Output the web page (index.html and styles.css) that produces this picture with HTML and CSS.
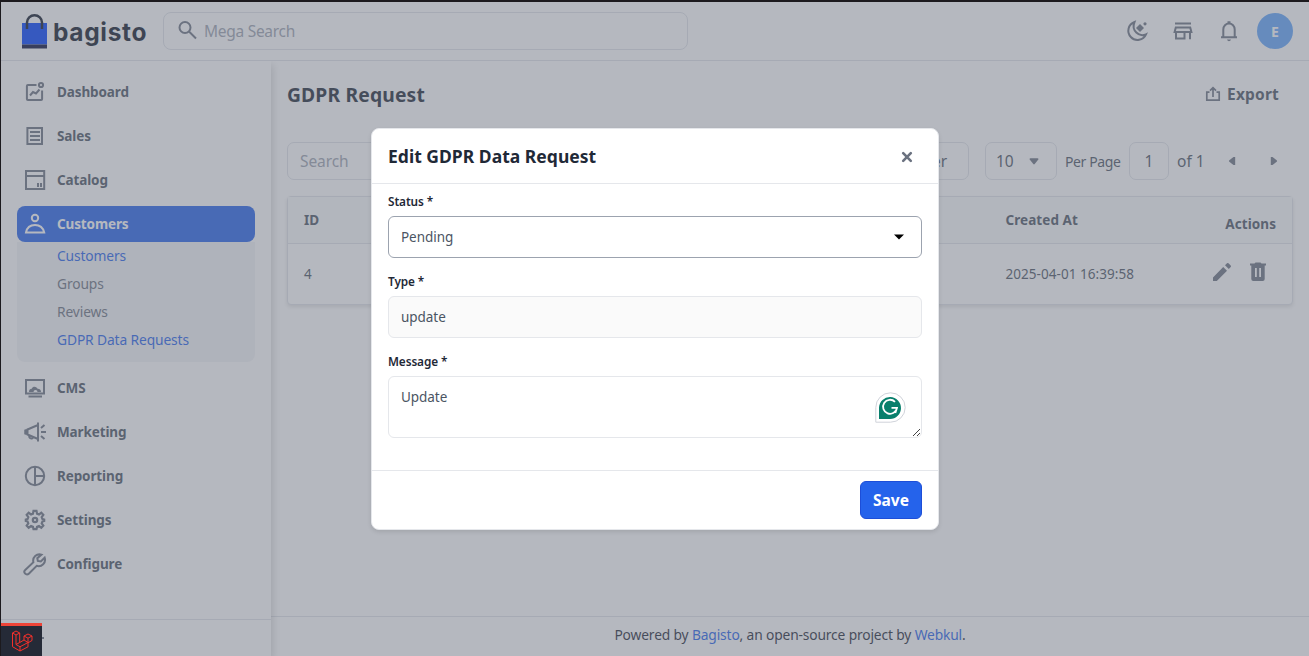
FILE: index.html
```
<!DOCTYPE html>
<html lang="en">
<head>
<meta charset="utf-8">
<title>GDPR Request</title>
<link rel="stylesheet" href="styles.css">
</head>
<body>
<div class="app">
  <header class="topbar">
    <div class="logo">
      <svg width="26" height="36" viewBox="0 0 26 36"><path class="bag" d="M1 10h25V31.500H1z"/><path class="bag-base" d="M1 31.500h25V35.500H1z"/><path class="bag-handle" d="M6 16V9.500a7.500 7.300 0 0 1 15 0V16"/></svg>
      <span class="wordmark">bagisto</span>
    </div>
    <div class="mega">
      <svg width="20" height="20" viewBox="0 0 20 20" class="ic w2"><circle cx="7" cy="6.500" r="5.500"/><path d="M11 10.500 18 17.500"/></svg>
      <span>Mega Search</span>
    </div>
    <div class="tools">
      <svg width="24" height="24" viewBox="0 0 24 24" class="ic w2"><path d="M9.500 3a9.200 9.200 0 1 0 11.500 12.300C14 18.500 6 11.500 9.500 3z"/><path class="solid" d="M15 5 19 9 15 13 11 9z"/><circle class="solid" cx="20" cy="4.800" r="1.600"/></svg>
      <svg width="24" height="24" viewBox="0 0 24 24" class="ic w2"><path d="M4 4.400h16M4.800 8.400h14.400l1.200 4.600H3.600zM5 13v6.400h8.500V13M19 13v7.300"/></svg>
      <svg width="24" height="24" viewBox="0 0 24 24" class="ic w2"><path d="M6.300 18v-7.500a5.700 6 0 0 1 11.400 0V18M4 18.300h16"/><path class="solid" d="M10.500 2.300h3v2.700h-3zM10 20.500h4q-.5 1.700-2 1.700t-2-1.700z"/></svg>
      <span class="avatar">E</span>
    </div>
  </header>

  <div class="body">
    <aside class="sidebar">
      <nav class="menu">
        <a class="item"><svg width="24" height="24" viewBox="0 0 24 24" class="ic w2"><path d="M13.500 4.900H4.900a1 1 0 0 0-1 1v13.200a1 1 0 0 0 1 1h13.200a1 1 0 0 0 1-1V10.500M7 15.500l3-3.500 3 1.500 3.500-4"/><circle cx="18" cy="5" r="2.100"/></svg><span>Dashboard</span></a>
        <a class="item"><svg width="24" height="24" viewBox="0 0 24 24" class="ic w2"><path d="M4.400 3.900h14.600v16.200h-14.600zM7 8h10M7 12h10M7 16h10"/></svg><span>Sales</span></a>
        <a class="item"><svg width="24" height="24" viewBox="0 0 24 24" class="ic w2"><path d="M3 3h18.200v18H3zM3 8h18.200M15 15v4M18 15v4"/></svg><span>Catalog</span></a>
        <a class="item active"><svg width="24" height="24" viewBox="0 0 24 24" class="ic w2"><circle cx="12" cy="6" r="3.200"/><path d="M3 20.500h18.200C20 15.500 17 13 12 13s-8 2.500-9 7.500z"/></svg><span>Customers</span></a>
        <div class="submenu">
          <a class="on">Customers</a><a>Groups</a><a>Reviews</a><a class="on">GDPR Data Requests</a>
        </div>
        <a class="item"><svg width="24" height="24" viewBox="0 0 24 24" class="ic w2"><path d="M3 4h18v13.600H3zM5.500 20.500h13.500"/><path class="solid" d="M6 16c0-2.200 1-3.200 2.700-3.200 1-2 3-2.500 4.800-1.300l1.200 1.200c2.500 0 3.300 1.300 3.300 3.300h-3.500a2 2 0 0 0-4 0z"/></svg><span>CMS</span></a>
        <a class="item"><svg width="24" height="24" viewBox="0 0 24 24" class="ic w2"><path d="M15 2.500v19M15 5 4.500 9.500v5L15 19"/><path d="M2.500 9.500v5M6.500 15.500a2 2 0 1 0 3.500 2M18 12h5M18 8l3.500-3M18 16l3.500 3"/><path class="solid" d="M1.500 10 5 8.800v6.400L1.500 14z"/></svg><span>Marketing</span></a>
        <a class="item"><svg width="24" height="24" viewBox="0 0 24 24" class="ic w2"><circle cx="12" cy="12" r="9.200"/><path d="M12 3v18M12 12h9"/></svg><span>Reporting</span></a>
        <a class="item"><svg width="24" height="24" viewBox="0 0 24 24" class="ic w22"><path d="M10.500 2.900h3l.5 2.700 2 .8 2.300-1.600 2 2-1.600 2.300.8 2 1.700.4v1.500l-1.700.4-.8 2 1.600 2.300-2 2L16 18.100l-2 .8-.5 2.200h-3l-.5-2.200-2-.8-2.300 1.600-2-2 1.600-2.300-.8-2-1.700-.4v-1.500l1.700-.4.8-2-1.600-2.300 2-2L8 6.400l2-.8z"/><circle cx="12" cy="12" r="2.200"/></svg><span>Settings</span></a>
        <a class="item"><svg width="24" height="24" viewBox="0 0 24 24" class="ic w2"><path d="M18.500 2.600a6.400 6.400 0 0 0-8.100 7.700L2.200 18a2.500 2.500 0 0 0 3.600 3.700l7.900-7.900a6.400 6.400 0 0 0 8-8.100l-3.900 3.800-3-.5-.5-2.800z"/></svg><span>Configure</span></a>
      </nav>
      <div class="collapse"><svg width="24" height="24" viewBox="0 0 24 24" class="ic w2"><path d="M4 12h17M10 6l-6 6 6 6"/></svg></div>
    </aside>

    <main class="main">
      <div class="content">
        <div class="titlebar">
          <h1>GDPR Request</h1>
          <span class="export"><svg width="16" height="16" viewBox="0 0 16 16" class="ic w16"><path d="M4.500 6.200H1.800v8h12.400v-8h-2.700M8 11V2M5 4.600 8 1.600l3 3"/></svg><b>Export</b></span>
        </div>
        <div class="toolbar">
          <span class="box search">Search</span>
          <div class="pager">
            <span class="box filter">Filter</span>
            <span class="box size">10<svg width="10" height="7" viewBox="0 0 10 7"><path class="fill" d="M.5 1.200Q.5.300 1.500.3h7q1 0 1 .9L5.700 6Q5 6.800 4.300 6z"/></svg></span>
            <span class="per">Per Page</span>
            <span class="box page">1</span>
            <span class="of">of 1</span>
            <svg class="prev" width="8" height="10" viewBox="0 0 8 10"><path class="fill" d="M7.200 1v8L5.500 9 1.300 5.700Q.5 5 1.300 4.300L5.500 1z"/></svg>
            <svg class="next" width="8" height="10" viewBox="0 0 8 10"><path class="fill" d="M.8 1v8L2.500 9 6.700 5.700Q7.500 5 6.700 4.300L2.500 1z"/></svg>
          </div>
        </div>
        <div class="table">
          <div class="row head"><span>ID</span><span>Created At</span><span class="actions">Actions</span></div>
          <div class="row"><span>4</span><span>2025-04-01 16:39:58</span>
            <span class="actions icons">
              <svg width="24" height="24" viewBox="0 0 24 24"><path class="fill" d="M3 17.500V21h3.800L17 10.800 13.200 7zM20.700 7q.7-.8 0-1.500L18.500 3.300q-.8-.7-1.500 0L15 5.200 18.800 9z"/></svg>
              <svg width="24" height="24" viewBox="0 0 24 24"><path class="fill" fill-rule="evenodd" d="M4 3.500h4.500L9.500 2.500h5l1 1H20v2h-1.300V19q0 2-2 2H7.300q-2 0-2-2V5.500H4zM9 8v9h1.800V8zM13.200 8v9H15V8z"/></svg>
            </span></div>
        </div>
      </div>
      <footer class="footer"><span>Powered by <a>Bagisto</a>, an open-source project by <a>Webkul</a>.</span></footer>
    </main>
  </div>
</div>

<div class="overlay">
  <section class="modal">
    <div class="modal-head"><h2>Edit GDPR Data Request</h2>
      <svg width="12" height="12" viewBox="0 0 12 12" class="close"><path d="M2.200 2.200 9.800 9.800M9.800 2.200 2.200 9.800"/></svg></div>
    <div class="modal-body">
      <label>Status *</label>
      <div class="field select"><span>Pending</span><svg width="10" height="6" viewBox="0 0 10 6"><path d="M0 .5h10L5 5.500z"/></svg></div>
      <label>Type *</label>
      <div class="field disabled">update</div>
      <label>Message *</label>
      <div class="field area">Update
        <svg class="checker" width="31" height="31" viewBox="0 0 31 31"><path d="M.8 30.200V15.500A14.700 14.700 0 1 1 15.500 30.200z" fill="#fff" stroke="#d0d3da"/><path d="M4 27V15.500A11 11 0 1 1 15 27z" fill="#087f6c"/><path d="M20 9.800A7 7 0 1 0 22 15.800H16.500M22 15.800 20.300 21" fill="none" stroke="#fff" stroke-width="1.800"/></svg>
        <svg class="grip" width="9" height="9" viewBox="0 0 9 9"><path d="M1 8 8 1M5 8l3-3" stroke="#444" fill="none"/></svg>
      </div>
    </div>
    <div class="modal-foot"><button>Save</button></div>
  </section>
</div>

<div class="debugbar">
  <svg width="22" height="22" viewBox="0 0 22 22"><path d="M1.500 3 5 1l3.700 2v9.500L13 10V6l4-2 4 2v4.500l-4 2.300v4L9 21l-7.500-4.300zM1.500 3 5 5l3.700-2M5 5v9.500l4 2.300V21M5 14.500l3.700-2M9 16.800l8-4.300M13 6l4 2.200L21 6M17 8.200v4.300M13 10l4 2.500"/></svg>
</div>
</body>
</html>
```
FILE: styles.css
```
* { box-sizing: border-box; }
body {
  margin: 0; height: 656px; overflow: hidden; position: relative;
  font-family: "Noto Sans", "Open Sans", sans-serif;
  font-size: 14px; color: #4b5563; background: #fff;
}
svg { display: block; flex: none; }
.ic { fill: none; stroke: #6b7280; }
.w2 { stroke-width: 2; }
.w22 { stroke-width: 2.200; }
.w16 { stroke-width: 1.700; }
.solid, .fill { fill: #6b7280; stroke: none; }
.app { height: 656px; display: flex; flex-direction: column; border-top: 2px solid #1c1a1e; border-left: 1px solid #1c1a1e; }

.topbar { height: 59px; flex: none; display: flex; align-items: center; border-bottom: 1px solid #e0e3e8; padding: 0 16px 0 20px; }
.logo { display: flex; align-items: center; gap: 6px; width: 142px; height: 40px; }
.bag { fill: #0041ff; }
.bag-base { fill: #060c3b; }
.bag-handle { fill: none; stroke: #101828; stroke-width: 2.500; }
.wordmark { font: 700 24.500px/30px Inter, sans-serif; letter-spacing: .65px; color: #101828; padding-top: 1px; }
.mega { width: 525px; height: 38px; border: 1px solid #e0e3e8; border-radius: 8px; display: flex; align-items: center; gap: 6px; padding-left: 14px; font-size: 15.500px; color: #9ca3af; letter-spacing: -.28px; }
.tools { margin-left: auto; display: flex; align-items: center; gap: 22px; }
.avatar { width: 36px; height: 36px; border-radius: 50%; background: #60a5fa; color: #fff; font-weight: 700; display: grid; place-items: center; margin-left: -6px; }

.body { flex: 1; display: flex; min-height: 0; }
.sidebar { width: 270px; flex: none; display: flex; flex-direction: column; box-shadow: 2px 4px 8px rgba(0,0,0,.16); clip-path: inset(0 -12px 0 0); }
.menu { flex: 1; padding: 13px 16px 0; }
.item { height: 36px; margin-bottom: 8px; display: flex; align-items: center; gap: 10px; padding-left: 6px; border-radius: 8px; font-weight: 700; font-size: 13.500px; letter-spacing: -.12px; }
.item.active { background: #2563eb; color: #fff; margin-bottom: 0; }
.active .ic { stroke: #fff; }
.submenu { height: 120px; margin-bottom: 8px; padding-left: 40px; background: #f3f4f6; border-radius: 0 0 8px 8px; color: #6b7280; font-size: 13.800px; letter-spacing: -.12px; }
.submenu a { display: block; height: 28px; line-height: 28px; }
.submenu .on { color: #2563eb; }
.collapse { height: 37px; border-top: 1px solid #e0e3e8; padding: 6px 0 0 22px; }

.main { flex: 1; display: flex; flex-direction: column; min-width: 0; }
.content { flex: 1; padding: 13px 16px 0; }
.titlebar { height: 40px; display: flex; align-items: center; justify-content: space-between; padding-right: 14px; }
h1 { margin: 0; font-size: 19.300px; font-weight: 700; letter-spacing: .15px; color: #1f2937; }
.export { display: flex; align-items: center; gap: 6px; font-size: 15.500px; letter-spacing: .2px; }
.export b { font-weight: 700; }
.toolbar { margin-top: 28px; display: flex; justify-content: space-between; }
.box { height: 38px; border: 1px solid #e0e3e8; border-radius: 7px; display: flex; align-items: center; padding: 0 12px; font-size: 15.500px; letter-spacing: -.1px; }
.search { width: 240px; color: #9ca3af; }
.pager { display: flex; align-items: center; color: #4b5563; padding-right: 15px; }
.filter { width: 90px; justify-content: flex-end; padding-right: 21px; margin-right: 16px; }
.size { width: 72px; gap: 15px; padding-left: 10px; margin-right: 8px; }
.per { width: 56px; margin-right: 8px; letter-spacing: -.4px; white-space: nowrap; }
.page { width: 40px; padding: 0; justify-content: center; margin-right: 8px; }
.of { width: 28px; font-size: 15.500px; letter-spacing: 0; white-space: nowrap; margin-right: 23px; }
.prev { margin-right: 34px; }
.table { margin-top: 16px; border: 1px solid #e0e3e8; border-radius: 4px; background: #fff; box-shadow: 0 2px 4px rgba(0,0,0,.12); }
.row { height: 60px; display: grid; grid-template-columns: 701.500px 1fr auto; align-items: center; padding: 0 16px; font-size: 13.500px; letter-spacing: .05px; }
.row.head { height: 47px; background: #f9fafb; border-bottom: 1px solid #e0e3e8; font-weight: 700; letter-spacing: .07px; }
.head .actions { padding-top: 8px; }
.icons { display: flex; gap: 12px; padding: 0 6px 4px 0; }
.footer { height: 40px; border-top: 1px solid #e0e3e8; display: grid; place-items: center; color: #1f2937; font-size: 13.800px; letter-spacing: -.15px; padding-bottom: 5px; }
.footer a { color: #2563eb; }

.overlay { position: absolute; inset: 2px 0 0 1px; background: rgba(107,114,128,.5); }
.modal { position: absolute; left: 370px; top: 126px; width: 568px; height: 402px; background: #fff; border: 1px solid #e5e7eb; border-radius: 8px; display: flex; flex-direction: column; box-shadow: 0 2px 4px rgba(0,0,0,.1); }
.modal-head { height: 55px; border-bottom: 1px solid #e5e7eb; display: flex; align-items: center; justify-content: space-between; padding: 0 25px 0 16px; }
h2 { margin: 0; font-size: 17.500px; font-weight: 700; letter-spacing: .02px; color: #1f2937; }
.close { fill: none; stroke: #6b7280; stroke-width: 2.600; stroke-linecap: round; position: relative; top: 1px; }
.modal-body { flex: 1; padding: 9px 16px 0; }
label { display: block; height: 16px; margin-bottom: 7px; line-height: 16px; font-size: 11.800px; font-weight: 600; letter-spacing: -.1px; color: #1f2937; }
.field { position: relative; height: 42px; margin-bottom: 15px; border: 1px solid #e5e7eb; border-radius: 6px; padding: 0 12px; line-height: 40px; font-size: 13.500px; letter-spacing: -.05px; }
.select { border-color: #9ca3af; display: flex; align-items: center; justify-content: space-between; padding-right: 17px; }
.disabled { background: #fafafa; }
.area { height: 62px; }
.checker { position: absolute; right: 15px; top: 15px; }
.grip { position: absolute; right: 0; bottom: 0; }
.modal-foot { height: 59px; border-top: 1px solid #e5e7eb; display: flex; align-items: center; justify-content: flex-end; padding-right: 16px; }
button { width: 62px; height: 38px; border: 1px solid #1d4ed8; border-radius: 6px; background: #2563eb; color: #fff; font: 700 15.500px "Noto Sans", sans-serif; letter-spacing: 0; padding: 0; }

.debugbar { position: absolute; left: 1px; bottom: 0; width: 41px; height: 33px; background: #252a37; border-top: 3px solid #ee4437; padding: 4px 0 0 10px; }
.debugbar svg { fill: none; stroke: #f5302b; stroke-width: 1; }
```
